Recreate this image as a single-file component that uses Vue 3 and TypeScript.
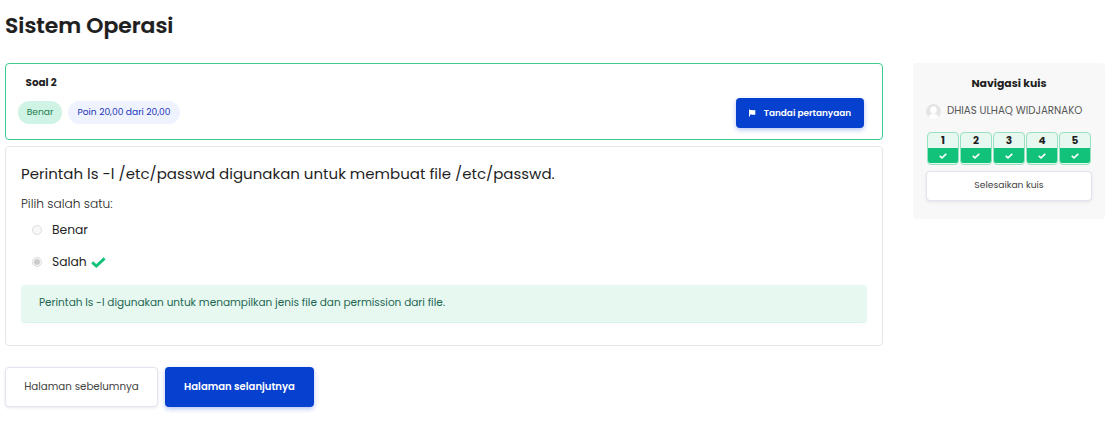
<script setup lang="ts">
interface Question {
  number: number
}

const questions: Question[] = [1, 2, 3, 4, 5].map((number) => ({ number }))
</script>

<template>
  <div class="page">
    <h1><span>Sistem Operasi</span></h1>
    <div class="layout">
      <main>
        <section class="info">
          <h3><span>Soal 2</span></h3>
          <div class="row">
            <span class="badge state"><span>Benar</span></span>
            <span class="badge grade"><span>Poin 20,00 dari 20,00</span></span>
            <button class="primary flag" type="button">
              <svg width="7" height="8" viewBox="0 0 7 8"><path d="M0 .6h1v.6c1.400-.8 2.400.4 5.300-.3v4.800C4.100 6.300 3 5 1 5.700V7.500H0z" fill="#fff" /></svg>
              <span>Tandai pertanyaan</span>
            </button>
          </div>
        </section>
        <section class="content">
          <p class="question"><span>Perintah ls -l /etc/passwd digunakan untuk membuat file /etc/passwd.</span></p>
          <p class="prompt"><span>Pilih salah satu:</span></p>
          <div class="option"><i class="radio"></i><span>Benar</span></div>
          <div class="option second">
            <i class="radio checked"></i><span>Salah</span>
            <svg class="tick" width="15" height="11" viewBox="0 0 15 11"><path d="M1.200 5.300 5.300 9l8.300-7.600" fill="none" stroke="#12c27b" stroke-width="2.900" /></svg>
          </div>
          <div class="feedback"><span>Perintah ls -l digunakan untuk menampilkan jenis file dan permission dari file.</span></div>
        </section>
        <div class="pager">
          <button class="plain prev" type="button"><span>Halaman sebelumnya</span></button>
          <button class="primary next" type="button"><span>Halaman selanjutnya</span></button>
        </div>
      </main>
      <aside>
        <h2><span>Navigasi kuis</span></h2>
        <div class="user">
          <svg width="15" height="15" viewBox="0 0 15 15">
            <clipPath id="avatar"><circle cx="7.500" cy="7.500" r="7.500" /></clipPath>
            <g clip-path="url(#avatar)">
              <rect width="15" height="15" fill="#e5e5e5" />
              <ellipse cx="7.500" cy="6" rx="3.200" ry="3.800" fill="#fff" />
              <path d="M2.500 15c0-4 2-5 5-5s5 1 5 5z" fill="#fff" />
            </g>
          </svg>
          <span>DHIAS ULHAQ WIDJARNAKO</span>
        </div>
        <div class="numbers">
          <div v-for="q in questions" :key="q.number" class="cell">
            <b>{{ q.number }}</b>
            <div class="mark"><svg width="8" height="6" viewBox="0 0 8 6"><path d="M.7 2.800 3 4.900 7.300.8" fill="none" stroke="#fff" stroke-width="1.600" /></svg></div>
          </div>
        </div>
        <button class="plain finish" type="button"><span>Selesaikan kuis</span></button>
      </aside>
    </div>
  </div>
</template>

<style>
body { background: #fff; overflow: hidden; }
</style>

<style scoped>
* { box-sizing: border-box; }
.page { height: 436px; padding-left: 5px; font-family: Poppins, Inter, "Open Sans", sans-serif; color: #1f1f1f; }
h1, h2, h3, p { margin: 0; }
span { white-space: nowrap; }
h1 { height: 63px; padding-top: 9px; font-size: 21.850px; line-height: 33px; font-weight: 600; -webkit-text-stroke: .2px #1f1f1f; }
.layout { display: flex; gap: 30px; }
main { width: 878px; }
.info { height: 77px; border: 1px solid #3ccb91; border-radius: 4px; padding: 9px 18px 0 12px; }
h3 { padding-left: 7.500px; font-size: 10.400px; line-height: 20px; font-weight: 700; }
.row { display: flex; align-items: center; margin-top: 4px; height: 32px; }
.badge { display: flex; align-items: center; justify-content: center; height: 23px; margin-bottom: 1px; border-radius: 12px; font-size: 9.150px; font-weight: 400; padding-bottom: 1px; }
.state { width: 44px; background: #cff3e4; color: #1f8050; }
.grade { width: 112px; margin-left: 6px; background: #eff2ff; color: #2033b8; }
button { display: flex; align-items: center; justify-content: center; padding: 0; font-family: inherit; border-radius: 4px; }
.primary { border: 0; background: #0640cf; color: #fff; font-weight: 600; box-shadow: 0 2px 5px rgba(6, 64, 207, .3); }
.flag { width: 128px; height: 30px; margin-left: auto; gap: 8px; font-size: 8.900px; }
.content { height: 200px; margin-top: 6px; border: 1px solid #e5e5e8; border-radius: 4px; padding: 15px 15px 0; }
.question { font-size: 15px; line-height: 24px; }
.prompt { margin-top: 9px; font-size: 12.200px; line-height: 18px; font-weight: 300; }
.option { display: flex; align-items: center; height: 18px; margin-top: 8px; padding-left: 11px; font-size: 12.300px; }
.second { margin-top: 14px; }
.radio { display: grid; place-items: center; width: 10px; height: 10px; margin: 0 10px 1px 0; border: 1px solid #dcdcdc; border-radius: 50%; background: #f8f8f8; }
.checked::after { content: ""; width: 6px; height: 6px; border-radius: 50%; background: #cbcbcb; }
.tick { margin-left: 4px; }
.feedback { height: 38px; margin-top: 14px; padding: 0 18px; line-height: 36px; border-bottom: 1px solid #d6f5e7; border-radius: 4px; background: #e7f8f1; color: #1c6650; font-size: 10.500px; }
.pager { display: flex; gap: 7px; margin-top: 21px; }
.pager button { height: 40px; font-size: 10.300px; }
.plain { border: 1px solid #e2e4f0; background: #fff; color: #424242; box-shadow: 0 1px 3px rgba(30, 40, 80, .1); }
.prev { width: 153px; }
.pager .next { width: 149px; font-size: 10.050px; }
aside { width: 192px; height: 156px; padding: 11px 13px 0; border-radius: 4px; background: #f8f8f8; }
h2 { display: flex; justify-content: center; font-size: 10.850px; line-height: 20px; font-weight: 700; }
.user { display: flex; align-items: center; gap: 6px; height: 20px; margin-top: 7px; font-size: 10.250px; color: #555; }
.numbers { display: flex; gap: 1px; margin: 11px 0 0 1px; }
.cell { width: 32px; height: 33px; padding-bottom: 1px; border: 1px solid #98e2c1; border-radius: 4px; overflow: hidden; background: #e7f8f1; }
.cell b { display: block; height: 15px; font-size: 10.500px; line-height: 15px; text-align: center; font-weight: 700; }
.mark { display: grid; place-items: center; height: 15px; background: #12c27b; border-radius: 0 0 2px 2px; }
.pager span { margin-bottom: 1px; }
.finish { width: 166px; height: 30px; margin-top: 6px; font-size: 9.200px; }
.finish span { margin-bottom: 2px; }
</style>
